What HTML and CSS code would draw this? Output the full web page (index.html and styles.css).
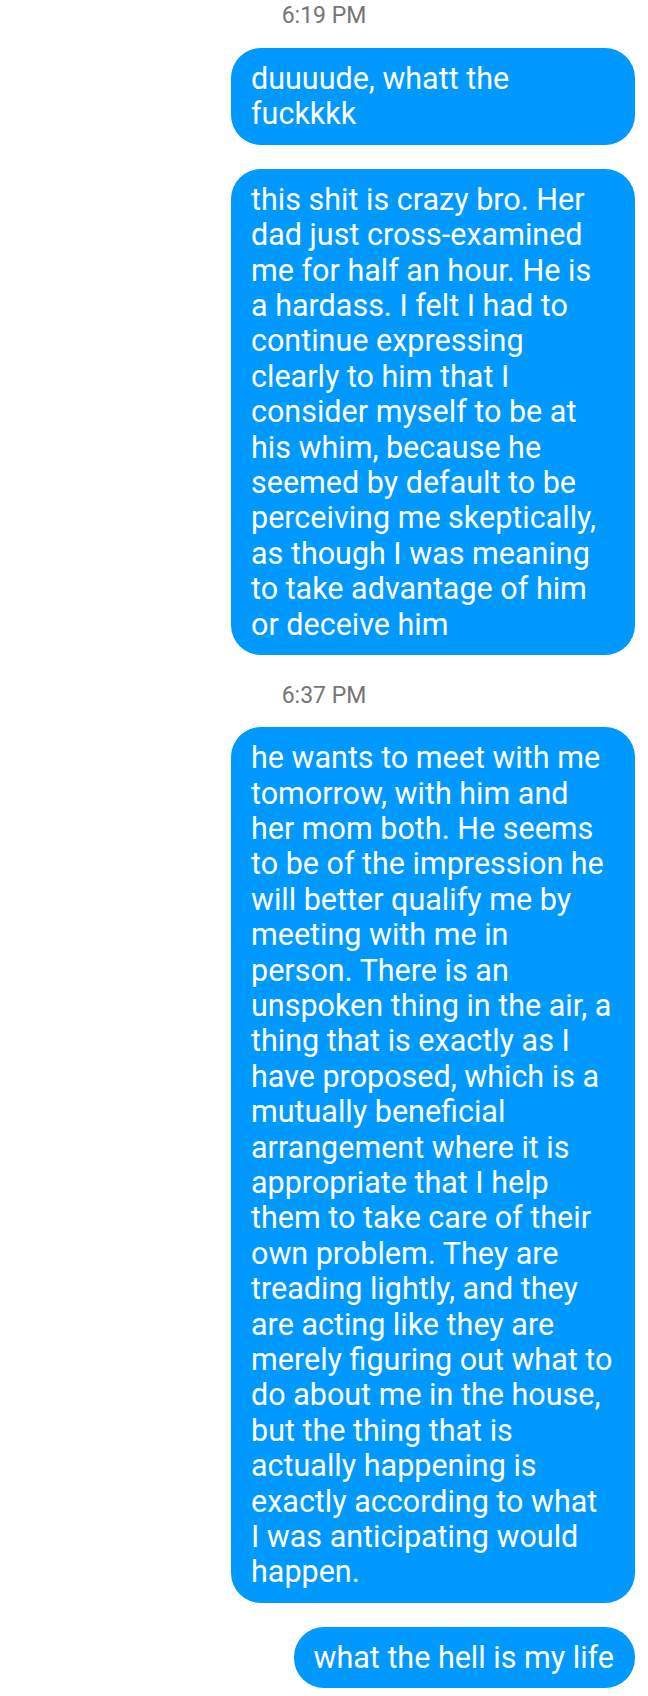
FILE: index.html
```html
<!DOCTYPE html>
<html>
<head>
<meta charset="utf-8">
<link rel="stylesheet" href="styles.css">
</head>
<body>
<div class="thread">
  <div class="stamp first">6:19 PM</div>
  <div class="bubble">duuuude, whatt the fuckkkk</div>
  <div class="bubble">this shit is crazy bro. Her dad just cross-examined me for half an hour. He is a hardass. I felt I had to continue expressing clearly to him that I consider myself to be at his whim, because he seemed by default to be perceiving me skeptically, as though I was meaning to take advantage of him or deceive him</div>
  <div class="stamp">6:37 PM</div>
  <div class="bubble">he wants to meet with me tomorrow, with him and her mom both. He seems to be of the impression he will better qualify me by meeting with me in person. There is an unspoken thing in the air, a thing that is exactly as I have proposed, which is a mutually beneficial arrangement where it is appropriate that I help them to take care of their own problem. They are treading lightly, and they are acting like they are merely figuring out what to do about me in the house, but the thing that is actually happening is exactly according to what I&nbsp;was anticipating would happen.</div>
  <div class="bubble">what the hell is my life</div>
</div>
</body>
</html>
```

FILE: styles.css
```css
html, body {
  margin: 0;
  padding: 0;
  background: #ffffff;
}
body {
  font-family: Roboto, "Noto Sans", Arial, sans-serif;
}
.thread {
  display: flex;
  flex-direction: column;
  align-items: flex-end;
  padding: 0 13px;
}
.stamp {
  align-self: center;
  font-size: 23px;
  line-height: 32px;
  color: #757575;
  margin: 25px 0 15px 0;
}
.stamp.first {
  margin-top: 0;
  margin-bottom: 16px;
}
.bubble {
  box-sizing: border-box;
  max-width: 404px;
  background: #0099ff;
  color: #ffffff;
  font-size: 30.5px;
  line-height: 35.4px;
  padding: 13px 21px 13px 20px;
  border-radius: 30px;
}
.bubble + .bubble {
  margin-top: 24px;
}
```
